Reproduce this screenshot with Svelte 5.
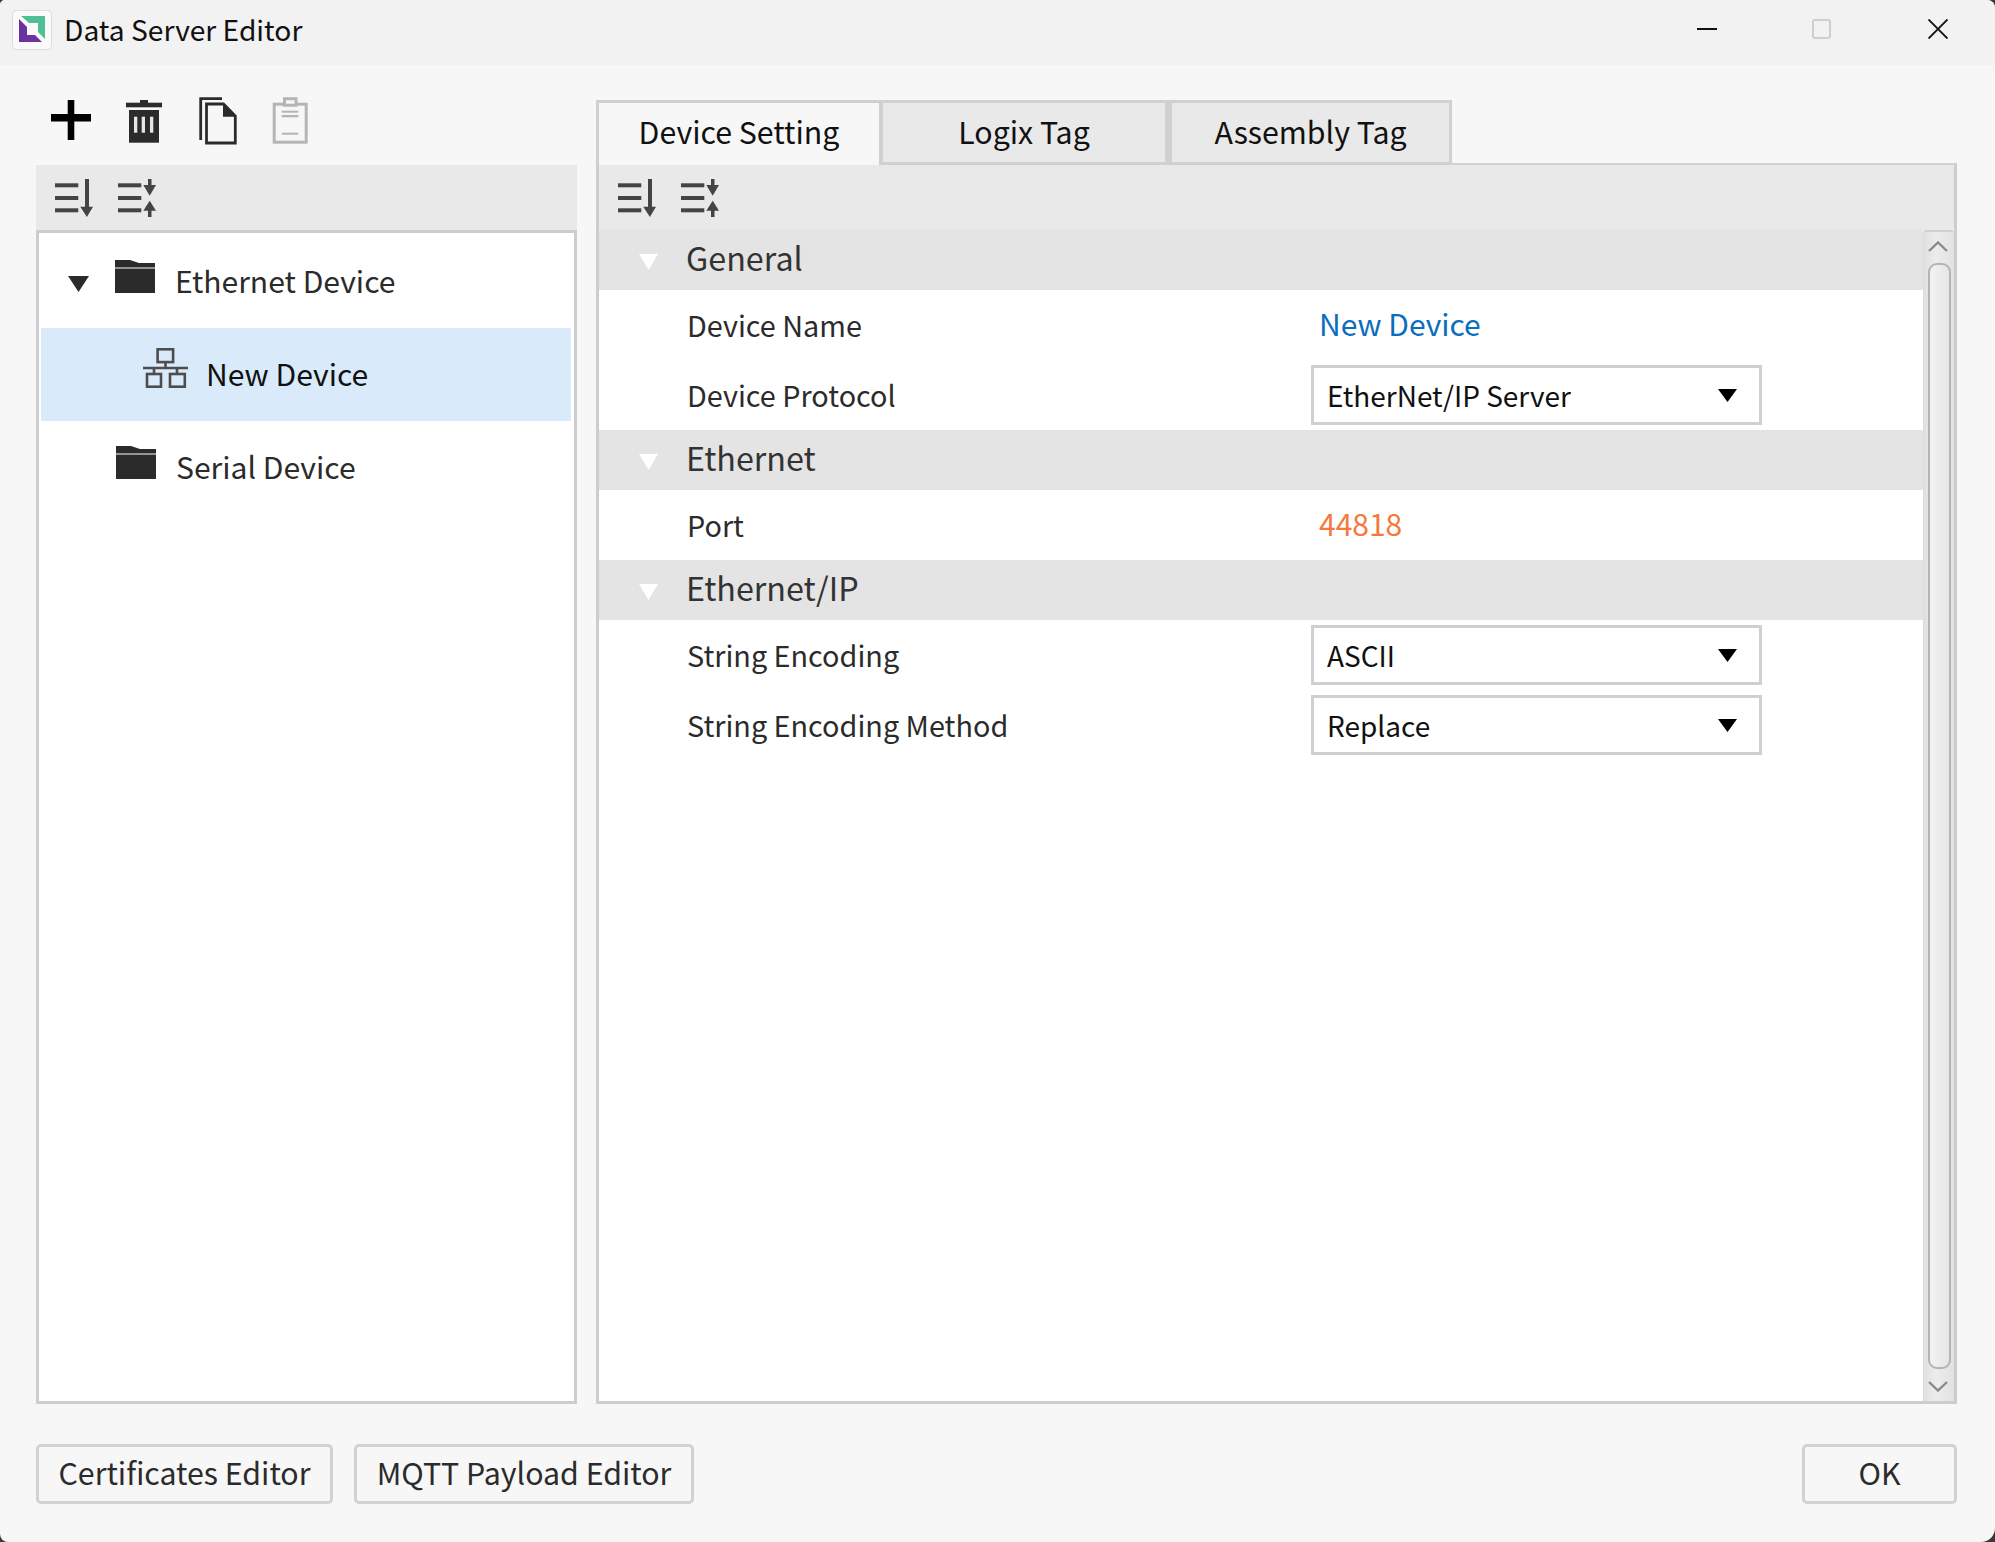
<script>
  const tabs = [
    { label: 'Device Setting', active: true },
    { label: 'Logix Tag', active: false },
    { label: 'Assembly Tag', active: false }
  ];
  const sections = [
    { title: 'General', rows: [
      { label: 'Device Name', value: 'New Device', kind: 'link' },
      { label: 'Device Protocol', value: 'EtherNet/IP Server', kind: 'select' }
    ] },
    { title: 'Ethernet', rows: [
      { label: 'Port', value: '44818', kind: 'num' }
    ] },
    { title: 'Ethernet/IP', rows: [
      { label: 'String Encoding', value: 'ASCII', kind: 'select' },
      { label: 'String Encoding Method', value: 'Replace', kind: 'select' }
    ] }
  ];
</script>

{#snippet expandIcon()}
  <svg class="ico38" viewBox="0 0 38 38" aria-hidden="true">
    <g fill="#444">
      <rect x="0" y="4.3" width="23.3" height="4"/>
      <rect x="0" y="17" width="23.3" height="4"/>
      <rect x="0" y="29.3" width="23.3" height="4"/>
      <rect x="30" y="0" width="4" height="28"/>
      <polygon points="25.3,27.7 38,27.7 31.9,38"/>
    </g>
  </svg>
{/snippet}

{#snippet collapseIcon()}
  <svg class="ico38" viewBox="0 0 38 38" aria-hidden="true">
    <g fill="#444">
      <rect x="0" y="4.3" width="23.3" height="4"/>
      <rect x="0" y="17" width="23.3" height="4"/>
      <rect x="0" y="29.3" width="23.3" height="4"/>
      <rect x="30" y="0" width="3.5" height="7"/>
      <polygon points="25.3,6 38,6 31.7,16.7"/>
      <polygon points="25.3,31.7 38,31.7 31.7,21.7"/>
      <rect x="30" y="31" width="3.5" height="7"/>
    </g>
  </svg>
{/snippet}

{#snippet folderIcon()}
  <svg class="folder" viewBox="0 0 40 33" aria-hidden="true">
    <path d="M0 0H15L24 3H40V7.5H0Z" fill="#2b2b2b"/>
    <rect x="0" y="8.5" width="40" height="24.5" fill="#2b2b2b"/>
  </svg>
{/snippet}

{#snippet caret()}
  <svg class="caret" viewBox="0 0 19 13" aria-hidden="true"><polygon points="0,0 19,0 9.5,13" fill="#000"/></svg>
{/snippet}

<div class="window">
  <header class="titlebar">
    <svg class="logo" viewBox="0 0 40 40" aria-hidden="true">
      <rect x="0.5" y="0.5" width="39" height="39" rx="4" fill="#fafafa" stroke="#dcdcdc"/>
      <polygon points="9,6 33,6 33,29 26,22 26,13 17,13" fill="#4fbf94"/>
      <polygon points="7,9 15,17 15,25 23,25 30,32 7,32" fill="#6a33a0"/>
    </svg>
    <span class="title">Data Server Editor</span>
    <div class="winctl">
      <span class="ctl min"></span>
      <span class="ctl max"></span>
      <svg class="ctl close" viewBox="0 0 20 20" aria-hidden="true"><path d="M0.5 0.5L19.5 19.5M19.5 0.5L0.5 19.5" stroke="#111" stroke-width="1.9" fill="none"/></svg>
    </div>
  </header>

  <main class="main">
    <section class="left">
      <div class="toolbar">
        <svg class="tool t40" viewBox="0 0 40 48" aria-hidden="true">
          <rect x="16.7" y="3" width="6.6" height="40" fill="#000"/>
          <rect x="0" y="17" width="40" height="7.5" fill="#000"/>
        </svg>
        <svg class="tool t38" viewBox="0 0 38 48" aria-hidden="true">
          <rect x="14" y="3" width="8" height="4" fill="#2b2b2b"/>
          <rect x="0" y="5.7" width="36" height="4.6" fill="#2b2b2b"/>
          <rect x="3" y="13" width="30" height="32.7" fill="#2b2b2b"/>
          <g fill="#e6e6e6">
            <rect x="8" y="19.7" width="3.3" height="16"/>
            <rect x="15.7" y="19.7" width="3.3" height="16"/>
            <rect x="24" y="19.7" width="3.3" height="16"/>
          </g>
        </svg>
        <svg class="tool t38" viewBox="0 0 38 48" aria-hidden="true">
          <path d="M1.7 43V1.7H23" fill="none" stroke="#2b2b2b" stroke-width="2.8"/>
          <path d="M7.5 7H24.5L36.3 19V46H7.5Z" fill="none" stroke="#2b2b2b" stroke-width="2.8"/>
          <polygon points="24,7 37,19.7 24,19.7" fill="#2b2b2b"/>
        </svg>
        <svg class="tool t36" viewBox="0 0 36 48" aria-hidden="true">
          <rect x="2.2" y="7.2" width="32" height="38" fill="none" stroke="#b5b5b5" stroke-width="3"/>
          <rect x="12.5" y="1.7" width="11.5" height="6.5" fill="#f7f7f7" stroke="#b5b5b5" stroke-width="3"/>
          <g fill="#b5b5b5">
            <rect x="9.7" y="13.7" width="16.6" height="2"/>
            <rect x="9.7" y="18" width="16.6" height="2.3"/>
            <rect x="9.7" y="35.7" width="16.6" height="2"/>
          </g>
        </svg>
      </div>
      <div class="subbar">
        {@render expandIcon()}
        {@render collapseIcon()}
      </div>
      <div class="tree">
        <div class="node root">
          <svg class="tree-arrow" viewBox="0 0 21 16" aria-hidden="true"><polygon points="0,0 21,0 10.5,16" fill="#2b2b2b"/></svg>
          {@render folderIcon()}
          <span class="node-label">Ethernet Device</span>
        </div>
        <div class="node device">
          <svg class="net" viewBox="0 0 45 40" aria-hidden="true">
            <g fill="none" stroke="#4d4d4d" stroke-width="2.6">
              <rect x="14.6" y="1.3" width="15.5" height="12.8"/>
              <path d="M22.5 14V20M0 20H45"/>
              <rect x="4" y="26" width="14" height="12.7"/>
              <rect x="27" y="26" width="14.8" height="12.7"/>
              <path d="M11 20V26M34 20V26"/>
            </g>
          </svg>
          <span class="node-label dark">New Device</span>
        </div>
        <div class="node serial">
          {@render folderIcon()}
          <span class="node-label">Serial Device</span>
        </div>
      </div>
    </section>

    <section class="right">
      <div class="tabs">
        {#each tabs as tab}
          <div class="tab" class:active={tab.active}>{tab.label}</div>
        {/each}
        <div class="tab-fill"></div>
      </div>
      <div class="panel">
        <div class="subbar inner">
          {@render expandIcon()}
          {@render collapseIcon()}
        </div>
        <div class="propwrap">
          <div class="props">
            {#each sections as s}
              <div class="sec">
                <svg class="sec-arrow" viewBox="0 0 19 16" aria-hidden="true"><polygon points="0,0 19,0 9.5,16" fill="#fff"/></svg>
                <span class="sec-title">{s.title}</span>
              </div>
              {#each s.rows as r}
                <div class="row">
                  <span class="lbl">{r.label}</span>
                  {#if r.kind === 'select'}
                    <div class="select"><span>{r.value}</span>{@render caret()}</div>
                  {:else}
                    <span class="val {r.kind}">{r.value}</span>
                  {/if}
                </div>
              {/each}
            {/each}
          </div>
          <div class="scrollbar">
            <svg class="chev up" viewBox="0 0 20 11" aria-hidden="true"><path d="M1 10L10 1.5L19 10" fill="none" stroke="#8a8a8a" stroke-width="2.4"/></svg>
            <div class="thumb"></div>
            <svg class="chev down" viewBox="0 0 20 11" aria-hidden="true"><path d="M1 1L10 9.5L19 1" fill="none" stroke="#8a8a8a" stroke-width="2.4"/></svg>
          </div>
        </div>
      </div>
    </section>
  </main>

  <footer class="footer">
    <button class="btn cert">Certificates Editor</button>
    <button class="btn mqtt">MQTT Payload Editor</button>
    <button class="btn ok">OK</button>
  </footer>
</div>

<style>
  :global(body) {
    margin: 0;
    background: #3a3a3a;
  }
  .window {
    width: 1995px;
    height: 1542px;
    box-sizing: border-box;
    background: #f7f7f7;
    border-radius: 5px 8px 14px 8px;
    overflow: hidden;
    display: flex;
    flex-direction: column;
    font-family: "Noto Sans CJK JP", "Noto Sans", sans-serif;
    font-size: 30px;
    color: #2b2b2b;
  }
  .titlebar {
    height: 65px;
    flex: none;
    background: #f2f2f2;
    display: flex;
    align-items: center;
    padding-left: 12px;
    box-sizing: border-box;
  }
  .logo { width: 40px; height: 40px; flex: none; margin-top: -6px; }
  .title { margin-left: 12px; color: #111; margin-top: -8px; line-height: 40px; font-size: 28.2px; }
  .winctl {
    margin-left: auto;
    margin-right: 47px;
    display: flex;
    align-items: center;
    margin-top: -7px;
  }
  .ctl { display: block; flex: none; }
  .min { width: 20px; height: 2.5px; background: #111; margin-right: 95px; }
  .max { width: 19px; height: 20px; box-sizing: border-box; border: 2px solid #cfcfcf; border-radius: 3px; margin-right: 97px; }
  .close { width: 20px; height: 20px; }

  .main {
    height: 1339px;
    flex: none;
    display: flex;
    gap: 19px;
    padding: 0 38px 0 36px;
  }
  .left {
    width: 541px;
    flex: none;
    display: flex;
    flex-direction: column;
  }
  .toolbar {
    height: 100px;
    flex: none;
    box-sizing: border-box;
    padding: 32px 0 0 15px;
    display: flex;
    gap: 35px;
    align-items: flex-start;
  }
  .tool { height: 48px; display: block; flex: none; }
  .t40 { width: 40px; }
  .t38 { width: 38px; }
  .t36 { width: 36px; }
  .subbar {
    height: 65px;
    flex: none;
    background: #e9e9e9;
    box-sizing: border-box;
    padding: 14px 0 0 19px;
    display: flex;
    gap: 25px;
    align-items: flex-start;
  }
  .subbar.inner { padding-left: 19px; }
  .ico38 { width: 38px; height: 38px; display: block; flex: none; }
  .tree {
    flex: 1;
    background: #fff;
    border: 3px solid #cdcdcd;
    box-sizing: border-box;
    padding: 2px 3px 0 2px;
  }
  .node {
    height: 93px;
    display: flex;
    align-items: center;
    box-sizing: border-box;
  }
  .root { padding-left: 27px; }
  .serial { padding-left: 75px; }
  .device { background: #d9ebfb; padding-left: 102px; }
  .tree-arrow { width: 21px; height: 16px; flex: none; margin-right: 26px; margin-top: 5px; }
  .folder { width: 40px; height: 33px; flex: none; margin-right: 20px; margin-top: -10px; }
  .net { width: 45px; height: 40px; flex: none; margin-right: 18px; margin-top: -13px; }
  .node-label { line-height: 40px; margin-top: -4px; font-size: 30.1px; }
  .dark { color: #111; }

  .right {
    flex: 1;
    display: flex;
    flex-direction: column;
    min-width: 0;
    padding-top: 35px;
  }
  .tabs { height: 65px; flex: none; display: flex; }
  .tab {
    height: 65px;
    box-sizing: border-box;
    border: 3px solid #d0d0d0;
    background: #e9e9e9;
    display: flex;
    align-items: center;
    justify-content: center;
    line-height: 40px;
    color: #111;
    flex: none;
    width: 283px;
    font-size: 30.3px;
    padding-bottom: 3px;
  }
  .tab:nth-child(2) { width: 290px; border-left-width: 4px; border-right-width: 4px; }
  .tab.active {
    background: #f7f7f7;
    border-bottom: none;
    border-right: none;
    padding-bottom: 6px;
  }
  .tab-fill {
    flex: 1;
    height: 65px;
    box-sizing: border-box;
    border-bottom: 2px solid #d0d0d0;
  }
  .panel {
    flex: 1;
    min-height: 0;
    display: flex;
    flex-direction: column;
    border: 3px solid #cdcdcd;
    border-top: none;
    box-sizing: border-box;
    background: #fff;
  }
  .propwrap { flex: 1; min-height: 0; display: flex; }
  .props { flex: 1; min-width: 0; }
  .sec {
    height: 60px;
    background: #e4e4e4;
    display: flex;
    align-items: center;
    padding-left: 40px;
    font-size: 32.3px;
    line-height: 40px;
    color: #333;
  }
  .sec-title { margin-top: -6px; }
  .sec-arrow { width: 19px; height: 16px; flex: none; margin-right: 28px; margin-top: 3px; }
  .row {
    height: 70px;
    display: flex;
    align-items: center;
  }
  .lbl { width: 712px; box-sizing: border-box; padding-left: 88px; flex: none; line-height: 40px; font-size: 28.8px; margin-top: -1px; }
  .val { padding-left: 8px; line-height: 40px; margin-top: -4px; }
  .link { color: #0a6ebd; }
  .num { color: #f5793b; }
  .select {
    width: 451px;
    height: 60px;
    box-sizing: border-box;
    border: 3px solid #d0d0d0;
    background: #fff;
    display: flex;
    align-items: center;
    padding: 0 22px 0 13px;
    justify-content: space-between;
    color: #111;
    line-height: 40px;
    font-size: 28px;
  }
  .caret { width: 19px; height: 13px; flex: none; }
  .scrollbar {
    width: 31px;
    flex: none;
    box-sizing: border-box;
    background: linear-gradient(to right, #e0e0e0, #ececec 40%, #e2e2e2);
    border-left: 1px solid #dcdcdc;
    border-top: 2px solid #cfcfcf;
    border-radius: 3px 3px 0 0;
    display: flex;
    flex-direction: column;
    align-items: center;
  }
  .chev { width: 20px; height: 11px; flex: none; display: block; margin-left: -2px; }
  .chev.up { margin-top: 9px; margin-bottom: 11px; }
  .chev.down { margin-top: 12px; margin-bottom: 9px; }
  .thumb {
    flex: 1;
    width: 23px;
    box-sizing: border-box;
    border: 2px solid #b4b4b4;
    border-radius: 9px;
    background: linear-gradient(to right, #f2f2f2, #e6e6e6);
  }

  .footer {
    flex: 1;
    display: flex;
    align-items: flex-start;
    padding: 40px 38px 0 36px;
    gap: 21px;
  }
  .btn {
    height: 60px;
    box-sizing: border-box;
    border: 3px solid #d2d2d2;
    border-radius: 5px;
    background: #f7f7f7;
    font: inherit;
    font-size: 30.3px;
    color: #2b2b2b;
    line-height: 40px;
    padding: 0 0 5px;
    flex: none;
  }
  .cert { width: 297px; }
  .mqtt { width: 340px; }
  .ok { width: 155px; margin-left: auto; }
</style>
